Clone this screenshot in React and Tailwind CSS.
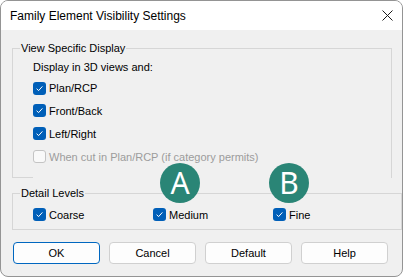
import React from "react";

function Box({ checked }) {
  if (checked) {
    return (
      <span className="w-[13px] h-[13px] rounded-[3px] bg-[#005fb8] flex items-center justify-center shrink-0">
        <svg width="9" height="9" viewBox="0 0 9 9">
          <path d="M1.6 4.7 L3.6 6.6 L7.4 2.4" stroke="white" strokeWidth="1" fill="none" />
        </svg>
      </span>
    );
  }
  return <span className="w-[13px] h-[13px] rounded-[3px] border border-[#c4c4c4] bg-[#f9f9f9] shrink-0" />;
}

function Check({ label, checked = true, disabled = false, className = "" }) {
  return (
    <div className={"flex items-center gap-[3px] " + className}>
      <Box checked={checked} />
      <span className={disabled ? "text-[#9c9c9c]" : "text-black"}>{label}</span>
    </div>
  );
}

function Badge({ letter, className }) {
  return (
    <div className={"absolute w-[40px] h-[40px] rounded-full bg-[#2a8576] flex items-center justify-center text-white text-[30px] leading-none [font-family:'Noto_Sans',sans-serif] " + className}>
      {letter}
    </div>
  );
}

export default function App() {
  return (
    <div className="w-[403px] h-[277px] bg-white">
      <div className="relative w-[403px] h-[277px] rounded-[8px] border border-[#949494] overflow-hidden bg-[#f0f0f0] flex flex-col text-[11px] leading-[16px] text-black [font-family:'Liberation_Sans',Arial,sans-serif]">
        <div className="h-[29px] bg-white flex items-center justify-between pl-[9px] pr-[9px] shrink-0 text-[12px]">
          <span>Family Element Visibility Settings</span>
          <svg width="11" height="11" viewBox="0 0 11 11">
            <path d="M0.5 0.5 L10.5 10.5 M10.5 0.5 L0.5 10.5" stroke="#1a1a1a" strokeWidth="1" fill="none" />
          </svg>
        </div>

        <fieldset className="relative ml-[11px] mt-[10px] w-[380px] border border-b-0 border-[#d6d6d6] px-[8px] pt-[3px] pb-[10px]">
          <legend className="px-[1px] -ml-[1px]">View Specific Display</legend>
          <div className="pl-[12px]">
            <div className="h-[16px]">Display in 3D views and:</div>
            <Check label="Plan/RCP" className="h-[22px] mt-[2px]" />
            <Check label="Front/Back" className="h-[23px]" />
            <Check label="Left/Right" className="h-[23px]" />
            <Check label="When cut in Plan/RCP (if category permits)" checked={false} disabled className="h-[23px]" />
          </div>
          <div className="absolute -left-[1px] bottom-0 w-[21px] h-[1px] bg-[#d6d6d6]" />
        </fieldset>

        <fieldset className="ml-[11px] mt-[7px] w-[380px] border border-[#d6d6d6] px-[8px] pt-[3px] pb-[4px]">
          <legend className="px-[1px] -ml-[1px]">Detail Levels</legend>
          <div className="pl-[12px] grid grid-cols-[120px_120px_120px]">
            <Check label="Coarse" className="h-[21px]" />
            <Check label="Medium" className="h-[21px]" />
            <Check label="Fine" className="h-[21px]" />
          </div>
        </fieldset>

        <div className="ml-[12px] mt-[12px] flex gap-[9px]">
          <button className="w-[87px] h-[22px] rounded-[4px] border border-[#0067c0] bg-[#fdfdfd] flex items-center justify-center">OK</button>
          <button className="w-[87px] h-[22px] rounded-[4px] border border-[#d0d0d0] bg-[#fdfdfd] flex items-center justify-center">Cancel</button>
          <button className="w-[87px] h-[22px] rounded-[4px] border border-[#d0d0d0] bg-[#fdfdfd] flex items-center justify-center">Default</button>
          <button className="w-[87px] h-[22px] rounded-[4px] border border-[#d0d0d0] bg-[#fdfdfd] flex items-center justify-center">Help</button>
        </div>

        <Badge letter="A" className="left-[159px] top-[162px]" />
        <Badge letter="B" className="left-[268px] top-[162px]" />
      </div>
    </div>
  );
}
